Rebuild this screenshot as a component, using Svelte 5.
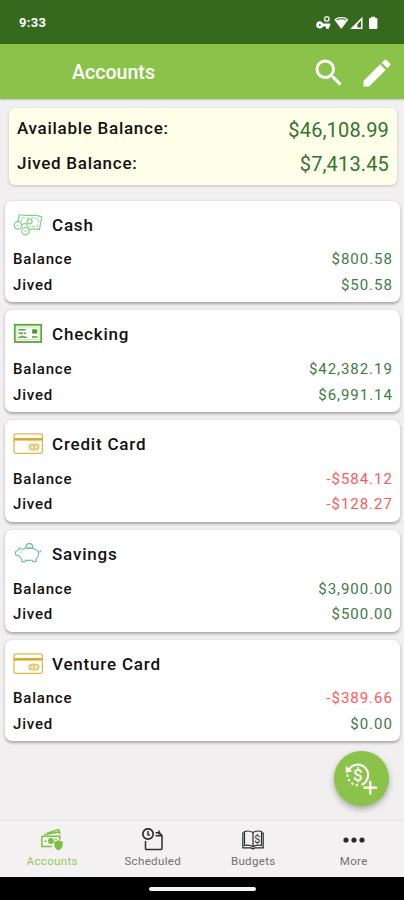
<script lang="ts">
  type Account = { name: string; icon: string; balance: number; jived: number }

  const accounts: Account[] = [
    { name: 'Cash', icon: 'cash', balance: 800.58, jived: 50.58 },
    { name: 'Checking', icon: 'check', balance: 42382.19, jived: 6991.14 },
    { name: 'Credit Card', icon: 'card', balance: -584.12, jived: -128.27 },
    { name: 'Savings', icon: 'piggy', balance: 3900, jived: 500 },
    { name: 'Venture Card', icon: 'card', balance: -389.66, jived: 0 },
  ]

  const tabs = ['Accounts', 'Scheduled', 'Budgets', 'More']
  let active = $state('Accounts')

  const fmt = new Intl.NumberFormat('en-US', { style: 'currency', currency: 'USD' })
  const money = (n: number) => fmt.format(n)
</script>

{#snippet accountIcon(kind: string)}
  <svg class="account-icon" width="30" height="26" viewBox="0 0 30 26" fill="none" aria-hidden="true">
    {#if kind === 'cash'}
      <g stroke="#7fce8c" stroke-width="1.2">
        <path d="M6.5 2.5C13 5 20 1.5 28.8 4.7L26.4 17.6C22 16 19 17 16 17.4M6.5 2.5L4.8 9.5" />
        <path d="M9 5.5c5 1.6 11-.8 16.8 1.5l-1.5 7.8c-3-.8-5-.4-8 0M8 9.5l1-4" stroke-width=".8" stroke-dasharray="3 1.5" />
        <circle cx="16.7" cy="9.4" r="2.4" />
        <circle cx="5" cy="13.4" r="3.7" />
        <circle cx="12.4" cy="19.2" r="3.7" />
        <path d="M8.6 12.5l4.5-1 2.4 4" />
      </g>
      <path d="M3.5 13.4h3M11 19.2h3" stroke="#a9dfb3" stroke-width="1" />
    {:else if kind === 'check'}
      <rect x="1.8" y="3.8" width="26.4" height="17.2" stroke="#5da43b" stroke-width="1.8" />
      <rect x="4" y="6" width="22" height="12.8" stroke="#b9dba9" stroke-width=".8" />
      <path d="M5.5 8.8h7M5.5 12.2h4.5M11 12.2h2M5.5 16.2h2.5l1.2-1 1.5 1h3M19 16h5.5" stroke="#58a038" stroke-width="1.4" />
      <rect x="19.2" y="8.3" width="5" height="4.2" fill="#4b962b" />
    {:else if kind === 'card'}
      <g stroke="#e0b747" stroke-width="1.3">
        <rect x="1" y="2.8" width="28.4" height="19.6" rx="2" />
        <path d="M1 8.3h28.4" stroke="#d9a92b" stroke-width="2.6" />
        <rect x="15.8" y="13.2" width="10.4" height="5.8" rx="2.9" stroke-width="1" />
        <circle cx="19.3" cy="16.1" r="1.9" stroke-width="1" />
        <circle cx="22.7" cy="16.1" r="1.9" stroke-width="1" />
      </g>
    {:else}
      <g stroke="#73bfa9" stroke-width="1.1" stroke-linejoin="round">
        <path d="M6.2 6.8l3.2 1.6c3.6-2.1 10.5-2.2 14.3.7 1.9 1.5 2.1 3 1.8 5.2-.3 2-1.6 2.9-2.6 3.8l.2 2.5h-3.3l-.7-1.6c-2 .5-4.3.5-6.5.1l-.6 1.5H8.9l-.3-3c-1.1-.8-1.8-1.7-2.3-2.7l-3.8-1.1v-3.2L5 9.5z" />
        <path d="M13.2 7.3a3.4 3.4 0 1 1 6.2.1" stroke-width="1.4" />
        <path d="M13.5 7.6c2-.6 4-.6 6 .2M25.4 10.8c1.5.5 2.3-.2 2-1.6" />
      </g>
      <circle cx="8" cy="11" r=".7" fill="#73bfa9" />
    {/if}
  </svg>
{/snippet}

{#snippet tabIcon(name: string)}
  <svg width="24" height="24" viewBox="0 0 24 24" fill="none" stroke="currentColor" stroke-width="1.5" aria-hidden="true">
    {#if name === 'Accounts'}
      <path d="M1.8 8.2h18v3.5M12 18.4H1.8V8.2M7 5.2L18.5 1.6l1.7 4.3M4.5 6.6L19 4" />
      <circle cx="11" cy="13" r="2.2" fill="currentColor" />
      <path d="M4.5 13.3h2M15.2 11.3h1.5" />
      <path d="M18.5 12.2l4.2 1.6v3.3c0 2.6-1.8 4.3-4.2 5.5-2.4-1.2-4.2-2.9-4.2-5.5v-3.3z" fill="currentColor" stroke="none" />
    {:else if name === 'Scheduled'}
      <circle cx="7" cy="6" r="5.2" stroke-width="1.7" />
      <path d="M7 3v3.7l2 .7M14.5 7.7h6.5v12.8a1 1 0 0 1-1 1H5.5a1 1 0 0 1-1-1V13M14.5 4.7h4l2.5 3M18 2.5v4" />
    {:else if name === 'Budgets'}
      <path d="M12 4.5C9 2.6 6 2.8 3.5 3.5v14c3.4-.7 6-.4 8.5 1.2V4.5zM12 4.5c3-1.9 6-1.7 8.5-1v14c-3.4-.7-6-.4-8.5 1.2" stroke-width="1.2" />
      <path d="M3.5 5H1.8v14.8h8.4c1 1.3 2.6 1.3 3.6 0h8.4V5h-1.7" stroke-width="1.2" />
      <text x="16.3" y="14.8" text-anchor="middle" class="glyph">$</text>
    {:else}
      <g fill="currentColor" stroke="none">
        <circle cx="4" cy="12" r="2.6" />
        <circle cx="12" cy="12" r="2.6" />
        <circle cx="20" cy="12" r="2.6" />
      </g>
    {/if}
  </svg>
{/snippet}

{#snippet amountRow(label: string, value: number)}
  <div class="row">
    <span class="label">{label}</span>
    <span class="amount" class:negative={value < 0}>{money(value)}</span>
  </div>
{/snippet}

<div class="screen">
  <div class="status-bar">
    <span class="clock">9:33</span>
    <svg width="64" height="16" viewBox="0 0 64 16" fill="#fff" aria-hidden="true">
      <!-- vpn key -->
      <path d="M4.8 6.3a3.6 3.6 0 0 1 3.3 2.2h7.1v3h-1.2v2.2h-3v-2.2H8.1A3.6 3.6 0 1 1 4.8 6.3zm0 2.6a1 1 0 1 0 0 2 1 1 0 0 0 0-2z" />
      <circle cx="11.8" cy="4" r="2.2" fill="none" stroke="#dce8d6" stroke-width="1.6" />
      <!-- wifi -->
      <path d="M19.2 4.4c4-3.3 10.2-3.3 14.2 0l-7.1 9.6z" />
      <path d="M21.6 5c3-1.6 6.4-1.6 9.4 0" fill="none" stroke="#35691e" stroke-width="1.1" />
      <!-- signal -->
      <path d="M47.5 1.8v12.2H35.2zm-1.5 3.7l-3.6 3.7v3.3h3.6z" fill-rule="evenodd" />
      <!-- battery -->
      <path d="M56.2 1.8h4v1.3h1.2a1 1 0 0 1 1 1v8.9a1 1 0 0 1-1 1H55a1 1 0 0 1-1-1V4.1a1 1 0 0 1 1-1h1.2z" />
    </svg>
  </div>

  <header class="toolbar">
    <h1>Accounts</h1>
    <button aria-label="Search">
      <svg width="36" height="36" viewBox="0 0 24 24" fill="#fff">
        <path d="M15.5 14h-.79l-.28-.27A6.471 6.471 0 0 0 16 9.5 6.5 6.5 0 1 0 9.5 16c1.61 0 3.09-.59 4.23-1.57l.27.28v.79l5 4.99L20.49 19l-4.99-5zm-6 0C7.01 14 5 11.99 5 9.5S7.01 5 9.5 5 14 7.01 14 9.5 11.99 14 9.5 14z" />
      </svg>
    </button>
    <button aria-label="Edit">
      <svg width="36" height="36" viewBox="0 0 24 24" fill="#fff">
        <path d="M3 17.25V21h3.75L17.81 9.94l-3.75-3.75L3 17.25zM20.71 7.04a1 1 0 0 0 0-1.41l-2.34-2.34a1 1 0 0 0-1.41 0l-1.83 1.83 3.75 3.75 1.83-1.83z" />
      </svg>
    </button>
  </header>

  <main>
    <section class="summary">
      <div class="row">
        <span class="label">Available Balance:</span>
        <span class="amount">{money(46108.99)}</span>
      </div>
      <div class="row">
        <span class="label">Jived Balance:</span>
        <span class="amount">{money(7413.45)}</span>
      </div>
    </section>

    <div class="accounts">
      {#each accounts as account}
        <section class="card">
          <div class="card-head">
            {@render accountIcon(account.icon)}
            <h2>{account.name}</h2>
          </div>
          {@render amountRow('Balance', account.balance)}
          {@render amountRow('Jived', account.jived)}
        </section>
      {/each}
    </div>
  </main>

  <button class="fab" aria-label="Add transaction">
    <svg width="36" height="36" viewBox="0 0 36 36" fill="none" stroke="#fff" stroke-width="2.1" aria-hidden="true">
      <path d="M4.6 9A10.4 10.4 0 1 1 17.5 23.7" />
      <path d="M14 24.1A10.4 10.4 0 0 1 3.5 13.5" stroke-dasharray="2.4 2.3" />
      <path d="M1.8 5v6.8l6.6-1.5z" fill="#fff" stroke="none" />
      <text x="13.9" y="20" text-anchor="middle" class="fab-glyph">$</text>
      <path d="M26.3 19.8v13.8M19.4 26.7h13.8" stroke-width="2.2" />
    </svg>
  </button>

  <nav class="tabs">
    {#each tabs as tab}
      <button class="tab" class:active={active === tab} onclick={() => (active = tab)}>
        {@render tabIcon(tab)}
        <span>{tab}</span>
      </button>
    {/each}
  </nav>

  <div class="gesture-bar"><span></span></div>
</div>

<style>
:global(body) { margin: 0; }

.screen {
  position: relative;
  display: flex;
  flex-direction: column;
  width: 404px;
  height: 900px;
  overflow: hidden;
  background: #f1eff0;
  font-family: Roboto, "Liberation Sans", sans-serif;
  color: #111;
}

button {
  display: flex;
  padding: 0;
  border: 0;
  background: none;
  font: inherit;
  color: inherit;
}

h1, h2 { margin: 0; font-weight: 500; white-space: nowrap; }

.status-bar {
  display: flex;
  flex: 0 0 44px;
  align-items: center;
  justify-content: space-between;
  box-sizing: border-box;
  padding: 1px 25px 0 19px;
  background: #35691e;
}

.clock {
  font-size: 13px;
  font-weight: 700;
  letter-spacing: 0.3px;
  color: #fff;
}

.toolbar {
  display: flex;
  flex: 0 0 55px;
  align-items: center;
  gap: 12px;
  box-sizing: border-box;
  padding: 3px 9px 0 72px;
  background: #8bc34a;
  box-shadow: 0 1px 2px rgba(0, 0, 0, 0.2);
  color: #fff;
}

.toolbar h1 {
  flex: 1;
  font-size: 19.6px;
  line-height: 24px;
}

main { flex: 1; min-height: 0; }

.row {
  display: flex;
  align-items: center;
  justify-content: space-between;
}

.label { font-weight: 500; }
.amount { margin-right: -0.8px; color: #437a47; }
.amount.negative { color: #ff5a5a; }

.summary {
  box-sizing: border-box;
  height: 77px;
  margin: 9px 7px 0 9px;
  padding: 3px 8px 0;
  border-radius: 6px;
  background: #fffee8;
  box-shadow: 0 1px 3px rgba(0, 0, 0, 0.2);
}

.summary .row { height: 34.5px; }
.summary .label { font-size: 17px; letter-spacing: 0.72px; }
.summary .amount {
  margin-right: 0;
  padding-top: 3px;
  font-size: 20px;
  letter-spacing: 0.15px;
  color: #337333;
}

.accounts {
  display: flex;
  flex-direction: column;
  gap: 8px;
  margin: 15.5px 4px 0 5px;
}

.card {
  box-sizing: border-box;
  height: 101.8px;
  padding: 9.5px 8px 0;
  border-radius: 7px;
  background: #fff;
  box-shadow: 0 1.5px 3px rgba(0, 0, 0, 0.3);
}

.card-head {
  display: flex;
  align-items: center;
  gap: 9px;
  height: 29px;
  margin-bottom: 7.5px;
}

.card-head h2 { font-size: 17px; letter-spacing: 0.8px; }
.card .row { height: 25.5px; font-size: 15px; letter-spacing: 0.8px; }
.card .amount { letter-spacing: 0.95px; }

.fab {
  position: absolute;
  right: 15px;
  bottom: 94px;
  width: 55px;
  height: 55px;
  align-items: center;
  justify-content: center;
  border-radius: 50%;
  background: #8bc34a;
  box-shadow: 0 3px 6px rgba(0, 0, 0, 0.3);
}

.fab-glyph { font-size: 17px; font-weight: 500; fill: #fff; stroke: none; }
.glyph { font-size: 10.5px; fill: currentColor; stroke: none; }

.tabs {
  display: flex;
  flex: 0 0 57px;
  box-sizing: border-box;
  padding-left: 2px;
  border-top: 1px solid #e6e4e5;
  background: #f3f1f2;
}

.tab {
  flex: 1;
  flex-direction: column;
  align-items: center;
  padding-top: 7px;
  font-size: 11.5px;
  line-height: 14px;
  letter-spacing: 0.35px;
  color: #707070;
}

.tab svg { color: #2c2c2c; }
.tab span { margin-top: 1.5px; }
.tab.active { color: #8fca60; }
.tab.active svg { color: #7cc142; }

.gesture-bar {
  display: flex;
  flex: 0 0 23px;
  align-items: center;
  justify-content: center;
  background: #000;
}

.gesture-bar span {
  width: 107px;
  height: 4px;
  border-radius: 2px;
  background: #f5f5f5;
}
</style>
